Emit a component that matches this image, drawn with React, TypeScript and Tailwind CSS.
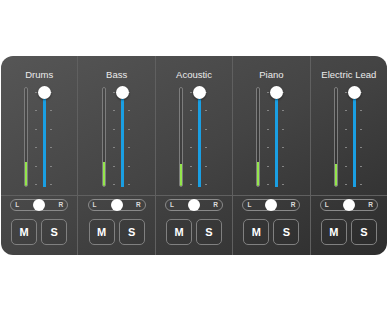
import React from "react";

const channels = [
  { name: "Drums", level: 24 },
  { name: "Bass", level: 24 },
  { name: "Acoustic", level: 22 },
  { name: "Piano", level: 24 },
  { name: "Electric Lead", level: 22 },
];

function Ticks() {
  return (
    <div className="flex h-full flex-col justify-between pt-[5px] pb-[2px]">
      {[0, 1, 2, 3, 4, 5].map((i) => (
        <div key={i} className="h-px w-[2px] bg-[#858585]" />
      ))}
    </div>
  );
}

function Channel({ name, level, last }: { name: string; level: number; last: boolean }) {
  return (
    <div
      className={
        "flex flex-1 flex-col items-center " + (last ? "" : "border-r border-[#606060]")
      }
    >
      <div className="pt-[13px] text-[9.5px] leading-[12px] text-[#ececec]">{name}</div>
      <div className="mt-[6px] flex h-[100px] flex-row pr-[2px]">
        <div className="relative h-full w-[4px] rounded-full border border-[#7d7d7d] bg-black/10">
          <div
            className="absolute bottom-0 left-0 right-0 rounded-b-full bg-[#94e64c]"
            style={{ height: level }}
          />
        </div>
        <div className="ml-[7px] h-full">
          <Ticks />
        </div>
        <div className="relative ml-[6px] h-full w-[3px]">
          <div className="absolute bottom-0 left-0 top-[5px] w-[3px] bg-[#1a9fe3]" />
          <div className="absolute left-[-5px] top-[-1px] h-[13px] w-[13px] rounded-full bg-white shadow-[0_1px_2px_rgba(0,0,0,0.5)]" />
        </div>
        <div className="ml-[4px] h-full">
          <Ticks />
        </div>
      </div>
      <div className="mt-[8px] h-px w-full bg-[#606060]" />
      <div className="relative mt-[3px] flex h-[12px] w-[58px] items-center justify-between rounded-full border border-[#8a8a8a] px-[4px] text-[6.5px] font-bold leading-none text-[#dcdcdc]">
        <span>L</span>
        <span>R</span>
        <div className="absolute left-1/2 top-1/2 h-[12px] w-[12px] -translate-x-1/2 -translate-y-1/2 rounded-full bg-white" />
      </div>
      <div className="mt-[8px] flex gap-[4px]">
        <div className="flex h-[26px] w-[26px] items-center justify-center rounded-[5px] border border-[#808080] bg-black/5 text-[11px] font-bold text-white">
          M
        </div>
        <div className="flex h-[26px] w-[26px] items-center justify-center rounded-[5px] border border-[#808080] bg-black/5 text-[11px] font-bold text-white">
          S
        </div>
      </div>
    </div>
  );
}

export default function App() {
  return (
    <div
      className="h-[312px] w-[388px] bg-white px-[1px] pt-[56px]"
      style={{ fontFamily: '"Liberation Sans", Arial, sans-serif' }}
    >
      <div className="flex h-[199px] overflow-hidden rounded-[12px] bg-gradient-to-br from-[#565656] via-[#444444] to-[#2d2d2d]">
        {channels.map((c, i) => (
          <Channel key={c.name} name={c.name} level={c.level} last={i === channels.length - 1} />
        ))}
      </div>
    </div>
  );
}
